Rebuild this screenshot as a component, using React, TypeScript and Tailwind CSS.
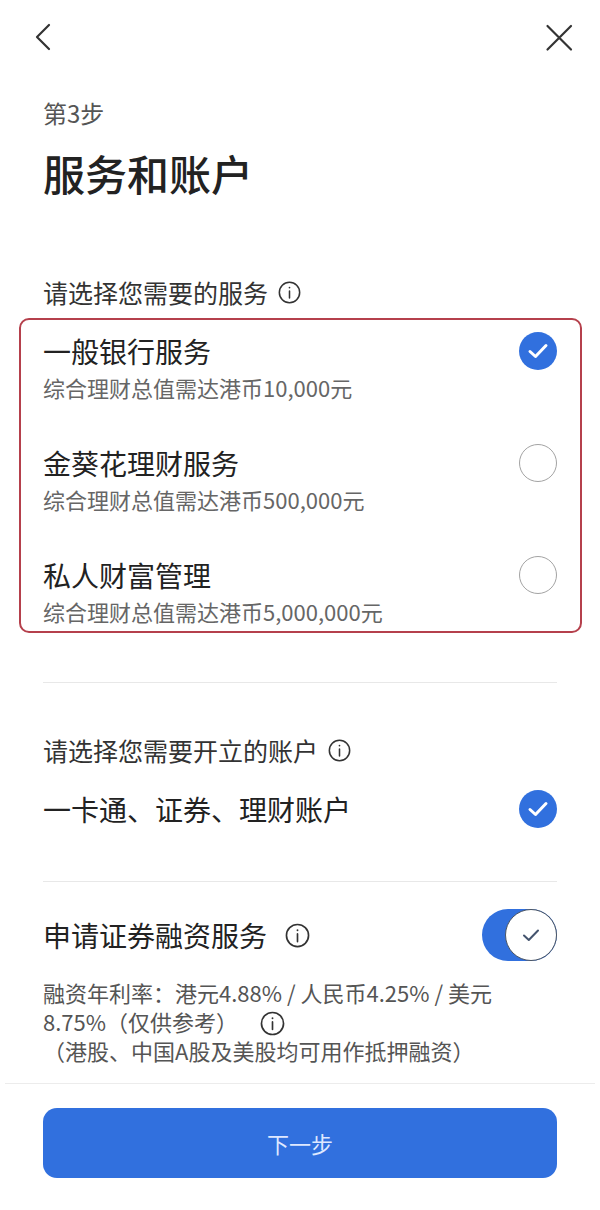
import React from "react";

const BLUE = "bg-[#3170de]";

function InfoIcon({ size = 22 }: { size?: number }) {
  return (
    <svg width={size} height={size} viewBox="0 0 24 24" fill="none" stroke="#333" strokeWidth={1.6}>
      <circle cx="12" cy="12" r="10.6" />
      <line x1="12" y1="10.5" x2="12" y2="17.8" strokeLinecap="round" />
      <circle cx="12" cy="6.9" r="0.9" fill="#333" stroke="none" />
    </svg>
  );
}

function CheckCircle({ checked }: { checked: boolean }) {
  if (!checked) {
    return <div className="h-[38px] w-[38px] shrink-0 rounded-full border-[1.5px] border-[#a3a3a3] bg-white" />;
  }
  return (
    <div className={`flex h-[38px] w-[38px] shrink-0 items-center justify-center rounded-full ${BLUE}`}>
      <svg width="38" height="38" viewBox="0 0 38 38" fill="none">
        <path d="M11 19.5 L16.5 24.5 L27 13.5" stroke="#fff" strokeWidth={3} strokeLinecap="round" strokeLinejoin="round" />
      </svg>
    </div>
  );
}

function Toggle() {
  return (
    <div className={`flex h-[52px] w-[75px] shrink-0 items-center justify-end rounded-full ${BLUE}`}>
      <div className="flex h-[52px] w-[52px] items-center justify-center rounded-full border-[1.5px] border-[#4b5563] bg-white">
        <svg width="22" height="22" viewBox="0 0 22 22" fill="none">
          <path d="M4 11.5 L8.8 16 L18 6.5" stroke="#44546e" strokeWidth={2} strokeLinecap="round" strokeLinejoin="round" />
        </svg>
      </div>
    </div>
  );
}

const services = [
  { name: "一般银行服务", req: "综合理财总值需达港币10,000元", checked: true },
  { name: "金葵花理财服务", req: "综合理财总值需达港币500,000元", checked: false },
  { name: "私人财富管理", req: "综合理财总值需达港币5,000,000元", checked: false },
];

export default function App() {
  return (
    <div className="min-h-[1210px] w-[600px] bg-white font-['Noto_Sans_CJK_SC','Noto_Sans',sans-serif] text-[#222]">
      {/* 顶部导航 */}
      <div className="flex items-start justify-between pl-[30px] pr-[26px] pt-[22px]">
        <svg width="30" height="30" viewBox="0 0 30 30" fill="none">
          <path d="M19 3 L7 15 L19 27" stroke="#333" strokeWidth={2.2} strokeLinecap="round" strokeLinejoin="round" />
        </svg>
        <svg width="30" height="30" viewBox="0 0 30 30" fill="none">
          <path d="M3.5 4 L27 27.5 M27 4 L3.5 27.5" stroke="#333" strokeWidth={2.2} strokeLinecap="round" />
        </svg>
      </div>

      <div className="px-[43px]">
        <div className="mt-[49px] text-[24px] leading-none text-[#555]">第3步</div>
        <h1 className="mt-[27px] text-[42px] font-medium leading-none text-[#222]">服务和账户</h1>

        <div className="mt-[86px] flex items-center gap-[10px] text-[25px] leading-none text-[#333]">
          <span>请选择您需要的服务</span>
          <InfoIcon size={23} />
        </div>
      </div>

      {/* 服务选择 */}
      <div className="ml-[19px] mt-[13px] w-[563px] rounded-[10px] border-2 border-[#b5404c] pb-[9px] pl-[22px] pr-[23px] pt-[12px]">
        <div className="flex flex-col gap-[46px]">
          {services.map((s) => (
            <div key={s.name}>
              <div className="flex h-[38px] items-center justify-between">
                <span className="text-[28px] leading-none">{s.name}</span>
                <CheckCircle checked={s.checked} />
              </div>
              <div className="mt-[6px] text-[22px] leading-none text-[#666]">{s.req}</div>
            </div>
          ))}
        </div>
      </div>

      <div className="mx-[43px] mt-[49px] h-px bg-[#e8e8e8]" />

      {/* 账户选择 */}
      <div className="px-[43px]">
        <div className="mt-[55px] flex items-center gap-[10px] text-[25px] leading-none text-[#333]">
          <span>请选择您需要开立的账户</span>
          <InfoIcon size={23} />
        </div>
        <div className="mt-[27px] flex h-[38px] items-center justify-between">
          <span className="text-[28px] leading-none">一卡通、证券、理财账户</span>
          <CheckCircle checked />
        </div>
      </div>

      <div className="mx-[43px] mt-[53px] h-px bg-[#e8e8e8]" />

      {/* 证券融资 */}
      <div className="px-[43px]">
        <div className="mt-[27px] flex h-[52px] items-center justify-between">
          <div className="flex items-center gap-[18px]">
            <span className="text-[28px] leading-none">申请证券融资服务</span>
            <InfoIcon size={25} />
          </div>
          <Toggle />
        </div>
        <div className="mt-[17px] text-[22px] leading-[29px] text-[#555]">
          <div>融资年利率：港元4.88% / 人民币4.25% / 美元</div>
          <div>
            8.75%（仅供参考）
            <span className="ml-[22px] inline-block align-[-5px]">
              <InfoIcon size={25} />
            </span>
          </div>
          <div>（港股、中国A股及美股均可用作抵押融资）</div>
        </div>
      </div>

      <div className="mx-[5px] mt-[18px] h-px bg-[#ececec]" />

      <div className="px-[43px]">
        <button className={`mt-[24px] flex h-[70px] w-full items-center justify-center rounded-[14px] ${BLUE} text-[22px] text-[#dfe8ff]`}>
          下一步
        </button>
      </div>
    </div>
  );
}
